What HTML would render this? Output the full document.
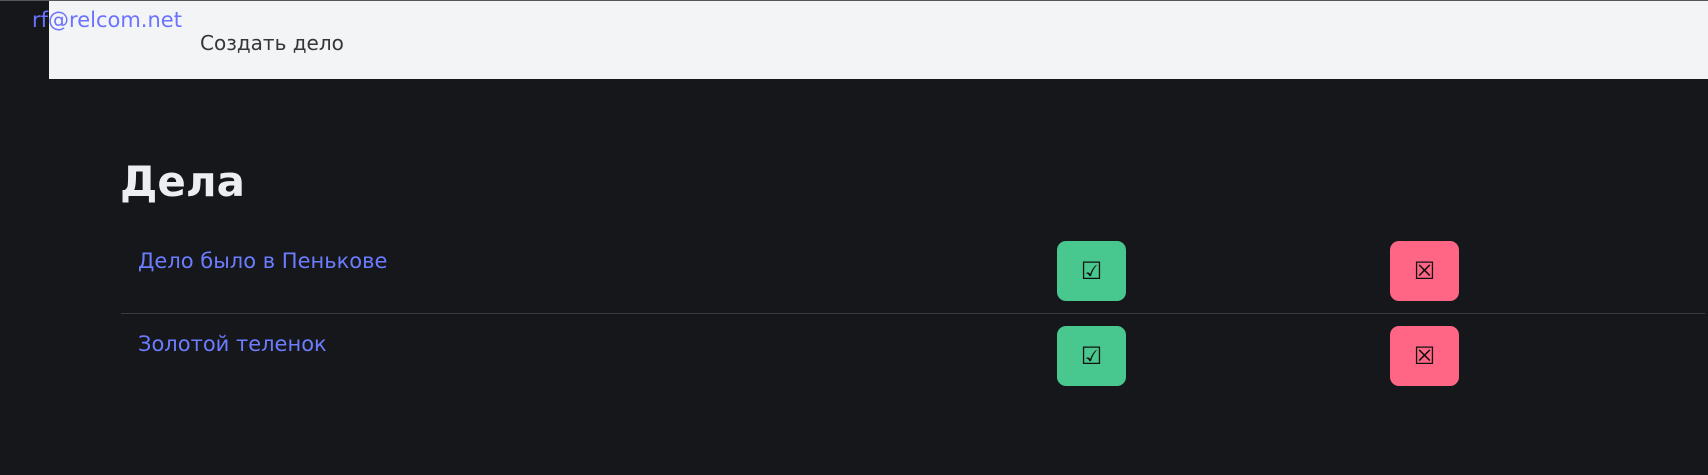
<!DOCTYPE html>
<html><head><meta charset="utf-8"><style>
body{margin:0;width:1708px;height:475px;background:#16171b;position:relative;overflow:hidden;font-family:"DejaVu Sans",sans-serif}
.t{position:absolute;white-space:nowrap;line-height:1}
.bar{position:absolute;left:49px;top:1px;width:1659px;height:78px;background:#f3f4f6}
.top{position:absolute;left:0;top:0;width:1708px;height:1px;background:#55565c}
.btn{position:absolute;width:69px;height:60px;border-radius:9px;display:flex;align-items:center;justify-content:center;font-size:24px;color:#111;font-family:"DejaVu Sans",sans-serif}
.g{background:#48c78e}.r{background:#ff6685}
</style></head><body>
<div class="top"></div>
<div class="bar"></div>
<div class="t" style="left:32px;top:10px;font-size:21px;color:#6b73ff">rf@relcom.net</div>
<div class="t" style="left:200px;top:33px;font-size:20px;color:#363636">Создать дело</div>
<div class="t" style="left:120px;top:161px;font-size:42px;font-weight:bold;color:#eceef2">Дела</div>
<div class="t" style="left:138px;top:251px;font-size:21px;color:#6b7cff">Дело было в Пенькове</div>
<div class="t" style="left:138px;top:334px;font-size:21px;color:#6b7cff">Золотой теленок</div>
<div style="position:absolute;left:121px;top:313px;width:1584px;height:1px;background:#3a3b40"></div>
<div class="btn g" style="left:1057px;top:241px">☑</div>
<div class="btn r" style="left:1390px;top:241px">☒</div>
<div class="btn g" style="left:1057px;top:326px">☑</div>
<div class="btn r" style="left:1390px;top:326px">☒</div>
</body></html>
